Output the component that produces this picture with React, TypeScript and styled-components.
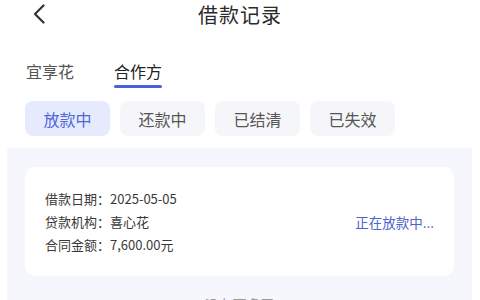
import React, { useState } from 'react'
import styled, { createGlobalStyle } from 'styled-components'

const GlobalStyle = createGlobalStyle`
  html, body {
    margin: 0;
    padding: 0;
    background: #ffffff;
    font-family: "Noto Sans CJK SC", "Noto Sans", sans-serif;
  }
`

const sources = ['宜享花', '合作方']
const statuses = ['放款中', '还款中', '已结清', '已失效']

const records = [
  {
    date: '2025-05-05',
    org: '喜心花',
    amount: '7,600.00元',
    state: '正在放款中...',
  },
]

const App = () => {
  const [source, setSource] = useState(1)
  const [status, setStatus] = useState(0)

  return (
    <Page>
      <GlobalStyle />
      <NavBar>
        <BackButton aria-label="back">
          <svg width="14" height="20" viewBox="0 0 14 20" fill="none">
            <path d="M11.5 1.5L3 10l8.5 8.5" stroke="#333" strokeWidth="2.2" strokeLinecap="round" strokeLinejoin="round" />
          </svg>
        </BackButton>
        <Title>借款记录</Title>
      </NavBar>

      <SourceTabs>
        {sources.map((el, i) => (
          <SourceTab key={el} $active={i === source} onClick={() => setSource(i)}>
            {el}
          </SourceTab>
        ))}
      </SourceTabs>

      <StatusRow>
        {statuses.map((el, i) => (
          <StatusChip key={el} $active={i === status} onClick={() => setStatus(i)}>
            {el}
          </StatusChip>
        ))}
      </StatusRow>

      <ListPanel>
        {records.map(el => (
          <RecordCard key={el.date}>
            <InfoList>
              <InfoLine>借款日期：{el.date}</InfoLine>
              <InfoLine>贷款机构：{el.org}</InfoLine>
              <InfoLine>合同金额：{el.amount}</InfoLine>
            </InfoList>
            <StateText>{el.state}</StateText>
          </RecordCard>
        ))}
        <NoMore>没有更多了</NoMore>
      </ListPanel>
    </Page>
  )
}

const Page = styled.div`
  width: 480px;
  height: 300px;
  overflow: hidden;
  background: #ffffff;
`

const NavBar = styled.div`
  position: relative;
  height: 28px;
  display: flex;
  align-items: center;
  justify-content: center;
`

const BackButton = styled.div`
  position: absolute;
  left: 32px;
  top: 4px;
  display: flex;
`

const Title = styled.div`
  font-size: 20px;
  font-weight: 400;
  color: #2a2a2a;
  letter-spacing: 1px;
`

const SourceTabs = styled.div`
  display: flex;
  gap: 40px;
  padding: 30px 26px 0;
`

const SourceTab = styled.div<{ $active: boolean }>`
  position: relative;
  font-size: 16px;
  line-height: 26px;
  padding-bottom: 4px;
  color: ${p => (p.$active ? '#222222' : '#555555')};

  &::after {
    content: '';
    display: ${p => (p.$active ? 'block' : 'none')};
    position: absolute;
    left: 0;
    right: 0;
    bottom: 0;
    height: 3.5px;
    border-radius: 2px;
    background: #4a62e2;
  }
`

const StatusRow = styled.div`
  display: flex;
  gap: 10px;
  padding: 13px 25px 0;
`

const StatusChip = styled.div<{ $active: boolean }>`
  width: 85px;
  height: 35px;
  display: flex;
  align-items: center;
  justify-content: center;
  border-radius: 8px;
  font-size: 16px;
  background: ${p => (p.$active ? '#e5eafc' : '#f5f6fa')};
  color: ${p => (p.$active ? '#5067d8' : '#555555')};
`

const ListPanel = styled.div`
  margin: 12px 8px 0 7px;
  padding: 19px 18px 0 18px;
  background: #f6f7fd;
  height: 200px;
`

const RecordCard = styled.div`
  display: flex;
  align-items: center;
  justify-content: space-between;
  padding: 20px;
  background: #ffffff;
  border-radius: 10px;
`

const InfoList = styled.div`
  display: flex;
  flex-direction: column;
`

const InfoLine = styled.div`
  font-size: 13px;
  line-height: 23px;
  color: #3a3a3a;
`

const StateText = styled.div`
  font-size: 13.5px;
  color: #4f63cc;
`

const NoMore = styled.div`
  margin-top: 18px;
  text-align: center;
  font-size: 14px;
  color: #999999;
`

export default App
